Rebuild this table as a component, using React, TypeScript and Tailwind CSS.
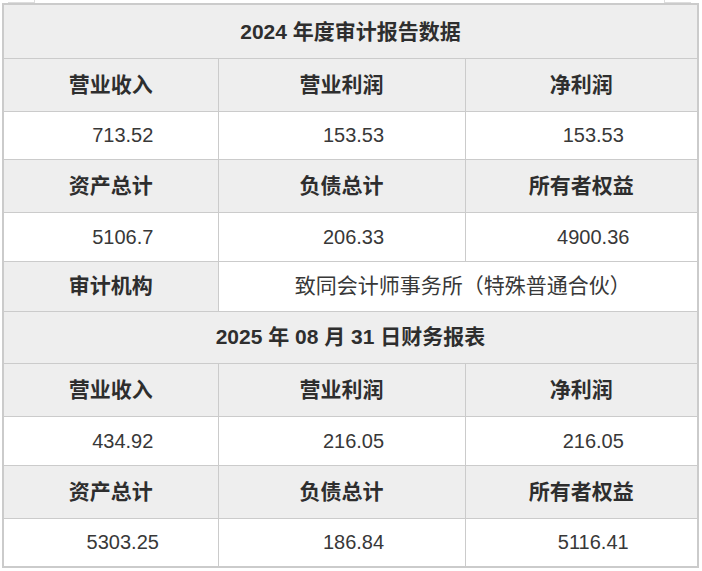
const font = {
  fontFamily: '"Liberation Sans", "Noto Sans CJK SC", sans-serif',
};

type Row =
  | { kind: "title"; text: string; h: string }
  | { kind: "head"; cells: string[]; h: string }
  | { kind: "value"; cells: string[]; h: string }
  | { kind: "audit"; label: string; h: string };

const rows: Row[] = [
  { kind: "title", text: "2024 年度审计报告数据", h: "h-[54px]" },
  { kind: "head", cells: ["营业收入", "营业利润", "净利润"], h: "h-[53px]" },
  { kind: "value", cells: ["713.52", "153.53", "153.53"], h: "h-[48px]" },
  { kind: "head", cells: ["资产总计", "负债总计", "所有者权益"], h: "h-[53px]" },
  { kind: "value", cells: ["5106.7", "206.33", "4900.36"], h: "h-[49px]" },
  { kind: "audit", label: "审计机构", h: "h-[50px]" },
  { kind: "title", text: "2025 年 08 月 31 日财务报表", h: "h-[52px]" },
  { kind: "head", cells: ["营业收入", "营业利润", "净利润"], h: "h-[53px]" },
  { kind: "value", cells: ["434.92", "216.05", "216.05"], h: "h-[49px]" },
  { kind: "head", cells: ["资产总计", "负债总计", "所有者权益"], h: "h-[53px]" },
  { kind: "value", cells: ["5303.25", "186.84", "5116.41"], h: "h-[49px]" },
];

const cell = "border border-[#cbcbcb] text-center align-middle p-0";
const bold = "bg-[#eeeeee] font-semibold text-[#2e2e2e]";

export default function App() {
  return (
    <div className="min-h-screen bg-white text-[#383838]" style={font}>
      <div className="flex h-[3px] justify-between pl-[8px] pr-[11px]">
        <div className="w-[27px] border-r border-b border-[#dddddd]" />
        <div className="w-[27px] border-l border-b border-[#dddddd]" />
      </div>
      <div className="pl-[2px] pr-[5px]">
        <table className="w-[695px] table-fixed border-collapse border-2 border-[#cbcbcb] text-[21px]">
          <colgroup>
            <col className="w-[215px]" />
            <col className="w-[247px]" />
            <col className="w-[233px]" />
          </colgroup>
          <tbody>
            {rows.map((row, i) => {
              if (row.kind === "title") {
                return (
                  <tr key={i} className={row.h}>
                    <td colSpan={3} className={`${cell} ${bold}`}>
                      {row.text}
                    </td>
                  </tr>
                );
              }
              if (row.kind === "audit") {
                return (
                  <tr key={i} className={row.h}>
                    <td className={`${cell} ${bold}`}>{row.label}</td>
                    <td colSpan={2} className={`${cell} bg-white pl-[10px]`}>
                      致同会计师事务所（特殊普通合伙）
                    </td>
                  </tr>
                );
              }
              const head = row.kind === "head";
              return (
                <tr key={i} className={row.h}>
                  {row.cells.map((c, j) => (
                    <td
                      key={j}
                      className={`${cell} ${head ? bold : "bg-white pl-[24px] text-[20px]"}`}
                    >
                      {c}
                    </td>
                  ))}
                </tr>
              );
            })}
          </tbody>
        </table>
      </div>
    </div>
  );
}
